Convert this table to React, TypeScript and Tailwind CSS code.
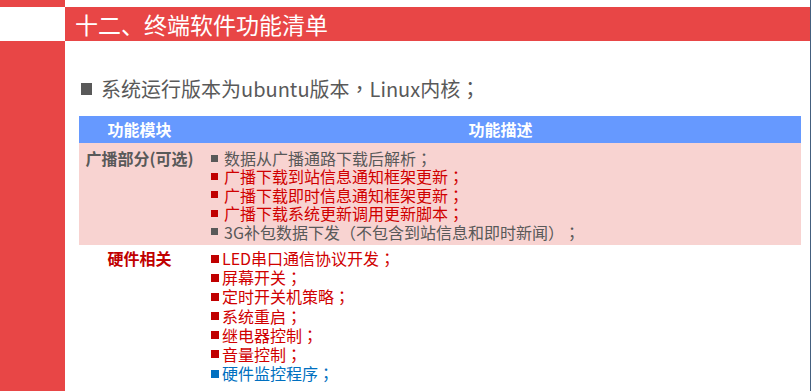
import React from "react";

const font = { fontFamily: '"Noto Sans CJK SC", "Noto Sans", sans-serif' };
const tc = { fontFamily: '"Noto Sans CJK TC", "Noto Sans CJK SC", sans-serif' };

function T({ s }: { s: string }) {
  const parts = s.split(/([，；])/);
  return (
    <>
      {parts.map((p, i) =>
        p === "，" || p === "；" ? (
          <span key={i} style={tc}>
            {p}
          </span>
        ) : (
          <React.Fragment key={i}>{p}</React.Fragment>
        )
      )}
    </>
  );
}

type Line = { text: string; bullet: string; color: string };

const row1: Line[] = [
  { text: "数据从广播通路下载后解析；", bullet: "bg-[#595959]", color: "text-[#595959]" },
  { text: "广播下载到站信息通知框架更新；", bullet: "bg-[#c00000]", color: "text-[#d00000]" },
  { text: "广播下载即时信息通知框架更新；", bullet: "bg-[#c00000]", color: "text-[#d00000]" },
  { text: "广播下载系统更新调用更新脚本；", bullet: "bg-[#c00000]", color: "text-[#d00000]" },
  { text: "3G补包数据下发（不包含到站信息和即时新闻）；", bullet: "bg-[#595959]", color: "text-[#595959]" },
];

const row2: Line[] = [
  { text: "LED串口通信协议开发；", bullet: "bg-[#c00000]", color: "text-[#d00000]" },
  { text: "屏幕开关；", bullet: "bg-[#c00000]", color: "text-[#d00000]" },
  { text: "定时开关机策略；", bullet: "bg-[#c00000]", color: "text-[#d00000]" },
  { text: "系统重启；", bullet: "bg-[#c00000]", color: "text-[#d00000]" },
  { text: "继电器控制；", bullet: "bg-[#c00000]", color: "text-[#d00000]" },
  { text: "音量控制；", bullet: "bg-[#c00000]", color: "text-[#d00000]" },
  { text: "硬件监控程序；", bullet: "bg-[#0070c0]", color: "text-[#0070c0]" },
];

export default function App() {
  return (
    <div
      className="w-[811px] h-[391px] flex bg-white overflow-hidden [text-spacing-trim:space-all]"
      style={font}
    >
      {/* left strip */}
      <div className="w-[65px] flex flex-col">
        <div className="h-[7px] bg-[#e84646]" />
        <div className="h-[34px] bg-white" />
        <div className="flex-1 bg-[#e84646]" />
      </div>

      {/* main */}
      <div className="w-[745px] flex flex-col">
        <div className="h-[7px]" />
        <div className="h-[34px] bg-[#e84646] flex items-center pl-[10px]">
          <span className="text-white text-[23px] leading-[34px]">十二、终端软件功能清单</span>
        </div>

        <div className="mt-[34px] ml-[16px] h-[28px] flex items-center text-[20px] leading-[28px] text-[#595959]">
          <span className="inline-block w-[11px] h-[12px] bg-[#595959] mr-[9px]" />
          <span className="whitespace-nowrap">
            <T s="系统运行版本为ubuntu版本，Linux内核；" />
          </span>
        </div>

        <div className="mt-[13px] ml-[14px] w-[722px]">
          {/* header */}
          <div className="h-[27px] bg-[#6699ff] flex text-white font-bold text-[16px] leading-[27px]">
            <div className="w-[121px] text-center">功能模块</div>
            <div className="flex-1 text-center">功能描述</div>
          </div>

          {/* row 1 */}
          <div className="bg-[#f8d3d1] flex pt-[6px] pb-[4px] text-[16px] leading-[18.4px]">
            <div className="w-[121px] text-center font-bold text-[#595959]">广播部分(可选)</div>
            <div className="flex-1 pl-[11px] flex flex-col">
              {row1.map((l, i) => (
                <div key={i} className="flex items-center h-[18.4px] whitespace-nowrap">
                  <span className={`inline-block w-[7px] h-[7px] mr-[6px] ${l.bullet}`} />
                  <span className={l.color}>
                    <T s={l.text} />
                  </span>
                </div>
              ))}
            </div>
          </div>

          {/* row 2 */}
          <div className="flex pt-[4px] text-[16px] leading-[19.2px]">
            <div className="w-[121px] text-center font-bold text-[#c00000]">硬件相关</div>
            <div className="flex-1 pl-[11px] flex flex-col">
              {row2.map((l, i) => (
                <div key={i} className="flex items-center h-[19.2px] whitespace-nowrap">
                  <span className={`inline-block w-[8px] h-[8px] mr-[3px] ${l.bullet}`} />
                  <span className={l.color}>
                    <T s={l.text} />
                  </span>
                </div>
              ))}
            </div>
          </div>
        </div>
      </div>

      {/* right border */}
      <div className="w-[1px] bg-[#44607f]" />
    </div>
  );
}
